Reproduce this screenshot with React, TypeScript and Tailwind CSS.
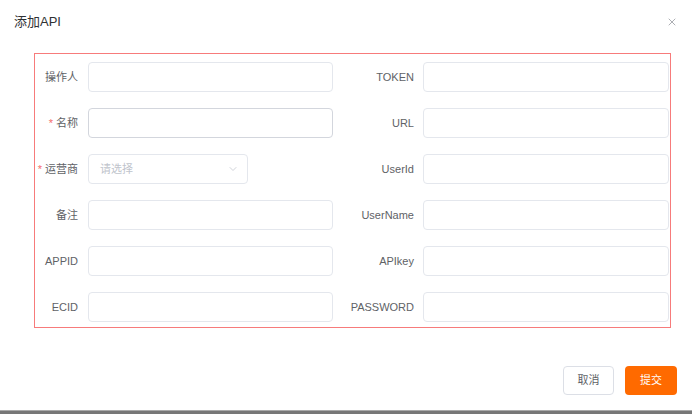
import { X, ChevronDown } from 'lucide-react';

type Field = { label: string; required?: boolean; select?: boolean };

const rows: [Field, Field][] = [
  [{ label: '操作人' }, { label: 'TOKEN' }],
  [{ label: '名称', required: true }, { label: 'URL' }],
  [{ label: '运营商', required: true, select: true }, { label: 'UserId' }],
  [{ label: '备注' }, { label: 'UserName' }],
  [{ label: 'APPID' }, { label: 'APIkey' }],
  [{ label: 'ECID' }, { label: 'PASSWORD' }],
];

function Label({ field, width }: { field: Field; width: string }) {
  return (
    <label className={`${width} shrink-0 flex justify-end items-center whitespace-nowrap text-[11px] text-[#606266]`}>
      {field.required && <span className="text-[#f56c6c] mr-[3px]">*</span>}
      {field.label}
    </label>
  );
}

export default function App() {
  return (
    <div
      className="w-[692px] h-[414px] bg-white flex flex-col overflow-hidden"
      style={{ fontFamily: '"Liberation Sans", "Noto Sans CJK SC", sans-serif' }}
    >
      {/* Header */}
      <div className="h-[44px] shrink-0 flex items-center justify-between pl-[14px] pr-[14px]">
        <h2 className="text-[13px] text-[#303133]">添加API</h2>
        <X className="w-[12px] h-[12px] text-[#909399]" strokeWidth={1.5} />
      </div>

      {/* Form */}
      <div className="ml-[34px] mt-[9px] w-[637px] border border-[#f77b7b] pt-[8px] pb-[5px] flex flex-col gap-[16px]">
        {rows.map(([left, right]) => (
          <div key={left.label} className="h-[30px] flex items-center">
            <Label field={left} width="w-[53px] pr-[10px]" />
            <div className="w-[245px] shrink-0">
              {left.select ? (
                <div className="w-[160px] h-[30px] border border-[#e4e7ed] rounded-[4px] flex items-center justify-between pl-[11px] pr-[8px]">
                  <span className="text-[11px] text-[#c0c4cc]">请选择</span>
                  <ChevronDown className="w-[12px] h-[12px] text-[#c0c4cc]" strokeWidth={1.5} />
                </div>
              ) : (
                <input
                  className={`w-[245px] h-[30px] rounded-[4px] border outline-none ${
                    left.label === '名称' ? 'border-[#d3d6dd]' : 'border-[#e4e7ed]'
                  }`}
                />
              )}
            </div>
            <Label field={right} width="w-[90px] pr-[9px]" />
            <input className="w-[246px] h-[30px] rounded-[4px] border border-[#e4e7ed] outline-none" />
          </div>
        ))}
      </div>

      {/* Footer */}
      <div className="mt-[38px] flex justify-end gap-[11px] pr-[15px]">
        <button className="w-[51px] h-[29px] rounded-[4px] border border-[#dcdfe6] text-[11px] text-[#606266] bg-white">
          取消
        </button>
        <button className="w-[52px] h-[29px] rounded-[4px] bg-[#ff6a00] text-[11px] text-white">
          提交
        </button>
      </div>

      <div className="mt-auto h-[4px] bg-[#777] border-t border-[#aaa]" />
    </div>
  );
}
